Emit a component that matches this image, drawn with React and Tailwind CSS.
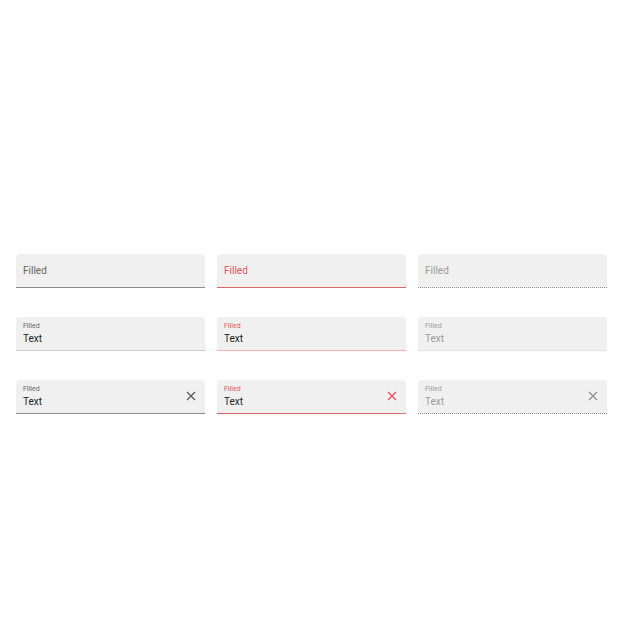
import { useState } from "react";

const tones = {
  normal: {
    label: "text-[#666666]",
    input: "text-[#212121]",
    icon: "text-[#555555]",
    line: "border-solid border-[#8c8c8c]",
    softLine: "border-solid border-[#cfcfcf]",
  },
  error: {
    label: "text-[#e05458]",
    input: "text-[#212121]",
    icon: "text-[#e04a52]",
    line: "border-solid border-[#d9666b]",
    softLine: "border-solid border-[#efb3b5]",
  },
  disabled: {
    label: "text-[#9b9b9b]",
    input: "text-[#9b9b9b]",
    icon: "text-[#8c8c8c]",
    line: "border-dotted border-[#8c8c8c]",
    softLine: "border-dotted border-[#d6d6d6]",
  },
};

function FilledField({ id, tone, initial = "", clearable = false, soft = false }) {
  const [value, setValue] = useState(initial);
  const colors = tones[tone];
  const disabled = tone === "disabled";
  const floating = initial !== "" || value !== "";

  return (
    <div
      className={`relative flex h-[34px] items-center border-b bg-[#f0f0f0] px-[7px] ${
        soft ? "rounded-t-[2px]" : "rounded-t-[4px]"
      } ${soft ? colors.softLine : colors.line}`}
    >
      <div className="flex min-w-0 flex-1 flex-col">
        <label
          htmlFor={id}
          className={
            floating
              ? `text-[7px] leading-[10px] ${colors.label}`
              : `pointer-events-none absolute top-[9px] text-[10px] leading-4 ${colors.label}`
          }
        >
          Filled
        </label>
        <input
          id={id}
          type="text"
          value={value}
          disabled={disabled}
          aria-invalid={tone === "error"}
          onChange={(event) => setValue(event.target.value)}
          className={`h-4 w-full bg-transparent text-[10px] leading-4 outline-none ${colors.input}`}
        />
      </div>
      {clearable && (
        <button
          type="button"
          aria-label="Clear"
          disabled={disabled}
          onClick={() => setValue("")}
          className={`flex h-4 w-[14px] items-start justify-center ${colors.icon}`}
        >
          <svg viewBox="0 0 14 14" className="size-[14px]" fill="none" stroke="currentColor" strokeWidth="1.2">
            <path d="M3 3 11 11M11 3 3 11" />
          </svg>
        </button>
      )}
    </div>
  );
}

export default function App() {
  return (
    <main className="flex min-h-screen items-center bg-white pt-7 pr-[33px] pl-4 font-['Roboto',sans-serif]">
      <form className="grid w-full grid-cols-3 gap-x-3 gap-y-[29px]">
        <FilledField id="empty-normal" tone="normal" />
        <FilledField id="empty-error" tone="error" />
        <FilledField id="empty-disabled" tone="disabled" />
        <FilledField id="text-normal" tone="normal" initial="Text" soft />
        <FilledField id="text-error" tone="error" initial="Text" soft />
        <FilledField id="text-disabled" tone="disabled" initial="Text" soft />
        <FilledField id="clear-normal" tone="normal" initial="Text" clearable />
        <FilledField id="clear-error" tone="error" initial="Text" clearable />
        <FilledField id="clear-disabled" tone="disabled" initial="Text" clearable />
      </form>
    </main>
  );
}
